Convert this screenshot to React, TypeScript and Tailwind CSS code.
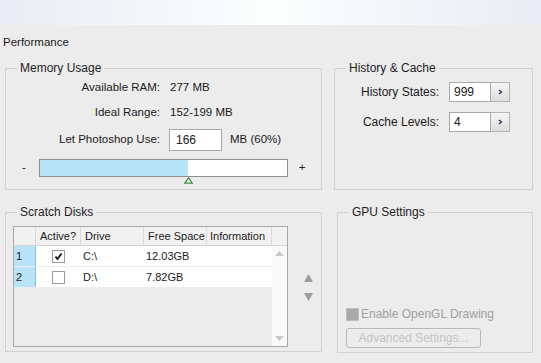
import React from 'react'

const font = { fontFamily: '"Liberation Sans", Arial, sans-serif' }

function Group({ title, className, children }: { title: string; className: string; children: React.ReactNode }) {
  return (
    <fieldset className={`border border-[#d2d2d2] ${className}`}>
      <legend className="ml-[11px] px-[3px] text-[12px] leading-[12px] text-[#1e1e1e]">{title}</legend>
      {children}
    </fieldset>
  )
}

function Spinner({ value }: { value: string }) {
  return (
    <div className="flex h-[20px]">
      <div className="w-[42px] h-full bg-white border border-[#a9a9a9] pl-[4px] flex items-center text-[12px]">{value}</div>
      <div className="w-[19px] h-full border border-l-0 border-[#b4b4b4] bg-gradient-to-b from-[#f7f7f7] to-[#dddddd] flex items-center justify-center">
        <svg width="5" height="6" viewBox="0 0 5 6">
          <path d="M1 1 L3.5 3 L1 5" stroke="#24345a" strokeWidth="1.3" fill="none" />
        </svg>
      </div>
    </div>
  )
}

function Tri({ up, color, w = 9, h = 6 }: { up?: boolean; color: string; w?: number; h?: number }) {
  return (
    <svg width={w} height={h} viewBox={`0 0 ${w} ${h}`}>
      <path d={up ? `M0 ${h} L${w / 2} 0 L${w} ${h} Z` : `M0 0 L${w / 2} ${h} L${w} 0 Z`} fill={color} />
    </svg>
  )
}

const rows = [
  { n: '1', active: true, drive: 'C:\\', free: '12.03GB' },
  { n: '2', active: false, drive: 'D:\\', free: '7.82GB' },
]

export default function App() {
  return (
    <div className="w-[541px] h-[363px] overflow-hidden bg-[#ececec] text-[11px] text-[#1a1a1a]" style={font}>
      <div className="h-[25px] bg-gradient-to-r from-[#e9ecf5] via-[#fdfefe] to-[#e9ecf5]" />
      <div className="pt-[10px] pl-[3px] text-[11.5px] leading-[14px]">Performance</div>

      <div className="flex pl-[5px] mt-[13px]">
        <Group title="Memory Usage" className="w-[317px] h-[128px]">
          <div className="pt-[4px] text-[11.5px]">
            <div className="flex items-center h-[20px]">
              <span className="w-[154px] text-right">Available RAM:</span>
              <span className="ml-[10px]">277 MB</span>
            </div>
            <div className="flex items-center h-[20px] mt-[5px]">
              <span className="w-[154px] text-right">Ideal Range:</span>
              <span className="ml-[10px]">152-199 MB</span>
            </div>
            <div className="flex items-center h-[22px] mt-[6px]">
              <span className="w-[154px] text-right">Let Photoshop Use:</span>
              <div className="ml-[9px] w-[53px] h-full bg-white border border-[#a9a9a9] pl-[6px] flex items-center text-[12px]">166</div>
              <span className="ml-[8px]">MB (60%)</span>
            </div>
            <div className="flex items-center h-[18px] mt-[8px]">
              <span className="w-[33px] pl-[3px] text-center">-</span>
              <div className="relative w-[249px] h-full border border-[#8f8f8f] bg-white">
                <div className="w-[148px] h-full bg-[#b8e4f8]" />
                <div className="absolute left-[144px] top-[17px]">
                  <svg width="9" height="7" viewBox="0 0 9 7">
                    <path d="M4.5 0.8 L8.2 6.2 L0.8 6.2 Z" fill="#f4fbf2" stroke="#3f8a45" strokeWidth="1.2" />
                  </svg>
                </div>
              </div>
              <span className="w-[28px] text-center">+</span>
            </div>
          </div>
        </Group>

        <Group title="History & Cache" className="ml-[12px] w-[199px] h-[128px]">
          <div className="pt-[8px]">
            <div className="flex items-center">
              <span className="w-[104px] text-right text-[12px]">History States:</span>
              <div className="ml-[10px]"><Spinner value="999" /></div>
            </div>
            <div className="flex items-center mt-[10px]">
              <span className="w-[104px] text-right text-[12px]">Cache Levels:</span>
              <div className="ml-[10px]"><Spinner value="4" /></div>
            </div>
          </div>
        </Group>
      </div>

      <div className="flex pl-[5px] mt-[16px]">
        <Group title="Scratch Disks" className="w-[317px] h-[146px]">
          <div className="flex pt-[8px] pl-[7px]">
            <div className="w-[275px] h-[121px] border border-[#a8a8a8] flex flex-col">
              <div className="flex h-[19px] bg-[#f1f1f1] border-b border-[#d6d6d6]">
                <div className="w-[22px] border-r border-[#dcdcdc]" />
                <div className="w-[45px] pl-[4px] flex items-center border-r border-[#dcdcdc]">Active?</div>
                <div className="w-[63px] pl-[4px] flex items-center border-r border-[#dcdcdc]">Drive</div>
                <div className="w-[63px] pl-[4px] flex items-center border-r border-[#dcdcdc]">Free Space</div>
                <div className="w-[65px] pl-[3px] flex items-center border-r border-[#dcdcdc]">Information</div>
                <div className="flex-1" />
              </div>
              <div className="flex flex-1">
                <div className="w-[258px] flex flex-col">
                  {rows.map(r => (
                    <div key={r.n} className="flex h-[21px] border-b border-[#ececec]">
                      <div className="w-[22px] bg-[#b9e3f9] border-r border-[#86bfdc] pl-[2px] flex items-center">{r.n}</div>
                      <div className="w-[45px] bg-white flex items-center justify-center">
                        <div className="w-[13px] h-[13px] border border-[#9a9a9a] bg-white flex items-center justify-center">
                          {r.active && (
                            <svg width="9" height="9" viewBox="0 0 9 9">
                              <path d="M1.5 4.5 L3.5 7 L7.5 1.5" stroke="#111" strokeWidth="1.8" fill="none" />
                            </svg>
                          )}
                        </div>
                      </div>
                      <div className="w-[63px] bg-white pl-[2px] flex items-center">{r.drive}</div>
                      <div className="w-[63px] bg-white pl-[2px] flex items-center">{r.free}</div>
                      <div className="w-[65px] bg-white" />
                    </div>
                  ))}
                </div>
                <div className="flex-1 bg-[#fafafa] flex flex-col items-center justify-between py-[5px]">
                  <Tri up color="#c8c8c8" w={9} h={5} />
                  <Tri color="#c8c8c8" w={9} h={5} />
                </div>
              </div>
            </div>
            <div className="flex flex-col items-center gap-[11px] pt-[48px] pl-[16px]">
              <Tri up color="#9c9c9c" w={9} h={8} />
              <Tri color="#9c9c9c" w={9} h={8} />
            </div>
          </div>
        </Group>

        <Group title="GPU Settings" className="ml-[15px] w-[196px] h-[147px]">
          <div className="flex flex-col pl-[8px] pt-[88px]">
            <div className="flex items-center h-[16px]">
              <div className="w-[13px] h-[13px] bg-[#a9a9a9] border border-[#bcbcbc]" />
              <span className="ml-[2px] text-[12px] text-[#9f9f9f]">Enable OpenGL Drawing</span>
            </div>
            <div className="mt-[6px] w-[135px] h-[20px] rounded-[3px] border border-[#b9b9b9] flex items-center justify-center text-[12px] text-[#c4c4c4]">
              Advanced Settings...
            </div>
          </div>
        </Group>
      </div>
    </div>
  )
}
